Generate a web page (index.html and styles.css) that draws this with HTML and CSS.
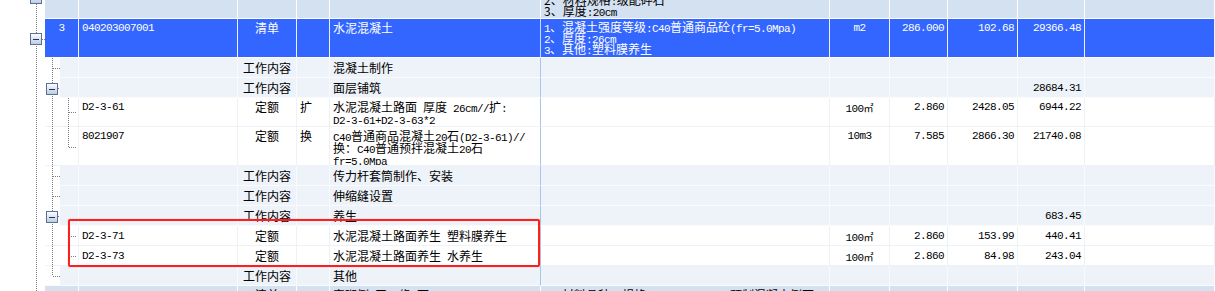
FILE: index.html
```html
<!DOCTYPE html>
<html>
<head>
<meta charset="utf-8">
<link rel="stylesheet" href="styles.css">
</head>
<body>
<div class="sheet">
  <div class="row r-list r-top">
    <div class="c gap"></div><div class="c"></div><div class="c"></div><div class="c"></div><div class="c"></div><div class="c name"></div>
    <div class="c feat"><div class="clip">1、材料品种<span class="a">:</span>水泥稳定碎石<br>2、材料规格<span class="a">:</span>级配碎石<br>3、厚度<span class="a">:20cm</span></div></div>
    <div class="c"></div><div class="c"></div><div class="c"></div><div class="c"></div><div class="c"></div>
  </div>

  <div class="row r-sel h3">
    <div class="c gap"></div>
    <div class="c ctr a">3</div>
    <div class="c a">040203007001</div>
    <div class="c ctr">清单</div>
    <div class="c"></div>
    <div class="c name">水泥混凝土</div>
    <div class="c feat tight"><span class="a">1</span>、混凝土强度等级<span class="a">:C40</span>普通商品砼<span class="a">(fr=5.0Mpa)</span><br><span class="a">2</span>、厚度<span class="a">:26cm</span><br><span class="a">3</span>、其他<span class="a">:</span>塑料膜养生</div>
    <div class="c ctr a">m2</div>
    <div class="c rt a">286.000</div>
    <div class="c rt a">102.68</div>
    <div class="c rt a">29366.48</div>
    <div class="c"></div>
  </div>

  <div class="row r-work h1">
    <div class="c gap"></div><div class="c lv"></div><div class="c"></div>
    <div class="c ctr">工作内容</div><div class="c"></div>
    <div class="c name">混凝土制作</div>
    <div class="c feat"></div><div class="c"></div><div class="c"></div><div class="c"></div><div class="c"></div><div class="c"></div>
  </div>

  <div class="row r-work h1">
    <div class="c gap"></div><div class="c lv"></div><div class="c"></div>
    <div class="c ctr">工作内容</div><div class="c"></div>
    <div class="c name">面层铺筑</div>
    <div class="c feat"></div><div class="c"></div><div class="c"></div><div class="c"></div><div class="c rt a">28684.31</div><div class="c"></div>
  </div>

  <div class="row r-quota h2">
    <div class="c gap"></div><div class="c lv"></div>
    <div class="c a">D2-3-61</div>
    <div class="c ctr">定额</div>
    <div class="c">扩</div>
    <div class="c name">水泥混凝土路面<span class="a"> </span>厚度<span class="a"> 26cm//</span>扩<span class="a">:</span><br><span class="a">D2-3-61+D2-3-63*2</span></div>
    <div class="c feat"></div>
    <div class="c ctr"><span class="a">100</span><span class="sq">㎡</span></div>
    <div class="c rt a">2.860</div>
    <div class="c rt a">2428.05</div>
    <div class="c rt a">6944.22</div>
    <div class="c"></div>
  </div>

  <div class="row r-quota h3">
    <div class="c gap"></div><div class="c lv"></div>
    <div class="c a">8021907</div>
    <div class="c ctr">定额</div>
    <div class="c">换</div>
    <div class="c name"><span class="a">C40</span>普通商品混凝土<span class="a">20</span>石<span class="a">(D2-3-61)//</span><br>换：<span class="a">C40</span>普通预拌混凝土<span class="a">20</span>石<br><span class="a">fr=5.0Mpa</span></div>
    <div class="c feat"></div>
    <div class="c ctr a">10m3</div>
    <div class="c rt a">7.585</div>
    <div class="c rt a">2866.30</div>
    <div class="c rt a">21740.08</div>
    <div class="c"></div>
  </div>

  <div class="row r-work h1">
    <div class="c gap"></div><div class="c lv"></div><div class="c"></div>
    <div class="c ctr">工作内容</div><div class="c"></div>
    <div class="c name">传力杆套筒制作、安装</div>
    <div class="c feat"></div><div class="c"></div><div class="c"></div><div class="c"></div><div class="c"></div><div class="c"></div>
  </div>

  <div class="row r-work h1">
    <div class="c gap"></div><div class="c lv"></div><div class="c"></div>
    <div class="c ctr">工作内容</div><div class="c"></div>
    <div class="c name">伸缩缝设置</div>
    <div class="c feat"></div><div class="c"></div><div class="c"></div><div class="c"></div><div class="c"></div><div class="c"></div>
  </div>

  <div class="row r-work h1">
    <div class="c gap"></div><div class="c lv"></div><div class="c"></div>
    <div class="c ctr">工作内容</div><div class="c"></div>
    <div class="c name">养生</div>
    <div class="c feat"></div><div class="c"></div><div class="c"></div><div class="c"></div><div class="c rt a">683.45</div><div class="c"></div>
  </div>

  <div class="row r-quota h1">
    <div class="c gap"></div><div class="c lv"></div>
    <div class="c a">D2-3-71</div>
    <div class="c ctr">定额</div>
    <div class="c"></div>
    <div class="c name">水泥混凝土路面养生<span class="a"> </span>塑料膜养生</div>
    <div class="c feat"></div>
    <div class="c ctr"><span class="a">100</span><span class="sq">㎡</span></div>
    <div class="c rt a">2.860</div>
    <div class="c rt a">153.99</div>
    <div class="c rt a">440.41</div>
    <div class="c"></div>
  </div>

  <div class="row r-quota h1">
    <div class="c gap"></div><div class="c lv"></div>
    <div class="c a">D2-3-73</div>
    <div class="c ctr">定额</div>
    <div class="c"></div>
    <div class="c name">水泥混凝土路面养生<span class="a"> </span>水养生</div>
    <div class="c feat"></div>
    <div class="c ctr"><span class="a">100</span><span class="sq">㎡</span></div>
    <div class="c rt a">2.860</div>
    <div class="c rt a">84.98</div>
    <div class="c rt a">243.04</div>
    <div class="c"></div>
  </div>

  <div class="row r-work h1">
    <div class="c gap"></div><div class="c lv"></div><div class="c"></div>
    <div class="c ctr">工作内容</div><div class="c"></div>
    <div class="c name">其他</div>
    <div class="c feat"></div><div class="c"></div><div class="c"></div><div class="c"></div><div class="c"></div><div class="c"></div>
  </div>

  <div class="row r-list h3">
    <div class="c gap"></div>
    <div class="c ctr a">4</div>
    <div class="c a">040203004001</div>
    <div class="c ctr">清单</div>
    <div class="c"></div>
    <div class="c name">安砌侧<span class="a">(</span>平、缘<span class="a">)</span>石</div>
    <div class="c feat"><span class="a">1</span>、材料品种、规格<span class="a">:C30 15*30*99 </span>预制混凝土侧石</div>
    <div class="c ctr a">m</div>
    <div class="c rt a">149.000</div>
    <div class="c rt a">4.66</div>
    <div class="c rt a">1112.42</div>
    <div class="c"></div>
  </div>

  <svg class="tree" width="80" height="291" viewBox="0 0 80 291">
    <defs>
      <linearGradient id="bx" x1="0" y1="0" x2="0" y2="1">
        <stop offset="0" stop-color="#ffffff"/>
        <stop offset="1" stop-color="#b9cbe4"/>
      </linearGradient>
    </defs>
    <g stroke="#7c7c7c" stroke-width="1" stroke-dasharray="1 1" fill="none">
      <line x1="36.5" y1="0" x2="36.5" y2="291"/>
      <line x1="42" y1="39.5" x2="45" y2="39.5"/>
      <line x1="52.5" y1="58" x2="52.5" y2="276"/>
      <line x1="53" y1="68.5" x2="60" y2="68.5"/>
      <line x1="58" y1="88.5" x2="60" y2="88.5"/>
      <line x1="68.5" y1="98" x2="68.5" y2="147"/>
      <line x1="69" y1="112.5" x2="77" y2="112.5"/>
      <line x1="69" y1="147.5" x2="77" y2="147.5"/>
      <line x1="53" y1="176.5" x2="60" y2="176.5"/>
      <line x1="53" y1="196.5" x2="60" y2="196.5"/>
      <line x1="58" y1="216.5" x2="60" y2="216.5"/>
      <line x1="68.5" y1="226" x2="68.5" y2="256"/>
      <line x1="69" y1="236.5" x2="77" y2="236.5"/>
      <line x1="69" y1="256.5" x2="77" y2="256.5"/>
      <line x1="53" y1="276.5" x2="60" y2="276.5"/>
    </g>
    <g class="exp">
      <rect x="30.5" y="-7.5" width="11" height="11" fill="url(#bx)" stroke="#5d7193"/>
      <rect x="30.5" y="33.5" width="11" height="11" fill="url(#bx)" stroke="#5d7193"/>
      <line x1="33" y1="39.5" x2="39" y2="39.5" stroke="#1b3566"/>
      <rect x="46.5" y="83.5" width="11" height="11" fill="url(#bx)" stroke="#5d7193"/>
      <line x1="49" y1="89.5" x2="55" y2="89.5" stroke="#1b3566"/>
      <rect x="46.5" y="211.5" width="11" height="11" fill="url(#bx)" stroke="#5d7193"/>
      <line x1="49" y1="217.5" x2="55" y2="217.5" stroke="#1b3566"/>
    </g>
  </svg>

  <div class="mark"></div>
</div>
</body>
</html>
```

FILE: styles.css
```css
html, body {
  margin: 0;
  padding: 0;
  background: #ffffff;
}

body {
  font-family: "Noto Sans CJK SC", "Noto Sans", sans-serif;
  font-size: 12px;
  line-height: 12px;
  color: #000000;
}

.sheet {
  position: relative;
  width: 1215px;
  height: 291px;
  overflow: hidden;
}

.row {
  display: grid;
  grid-template-columns: 45px 34px 159px 59px 33px 211px 289px 60px 58px 70px 67px 130px;
  --pt: 4px;
}

.h1 { height: 20px; }
.h2 { height: 29px; --pt: 3px; }
.h3 { height: 39px; --pt: 3px; }

.r-top { height: 19px; }

.r-list {
  --bg: #d3e1f1;
  --vl: #ffffff;
  --hl: #ffffff;
  --nl: #ffffff;
}

.r-sel {
  --bg: #3366ff;
  --vl: #eef2ff;
  --hl: #ffffff;
  --nl: #c9d8ff;
  color: #ffffff;
}

.r-work {
  --bg: #eef3f9;
  --vl: #f8fafd;
  --hl: #f9fbfd;
  --nl: #a8c6ec;
}

.r-quota {
  --bg: #ffffff;
  --vl: #eef2f7;
  --hl: #eef2f7;
  --nl: #a8c6ec;
}

.c {
  box-sizing: border-box;
  padding: var(--pt) 3px 0 3px;
  overflow: hidden;
  white-space: nowrap;
  background: var(--bg);
  border-right: 1px solid var(--vl);
  border-bottom: 1px solid var(--hl);
}

.c.gap {
  background: #ffffff;
  border: 0;
}

.c.lv {
  background: linear-gradient(to right, #ffffff 15px, var(--bg) 15px);
}

.c.name {
  border-right-color: var(--nl);
}

.c.tight {
  line-height: 11px;
  padding-top: 2px;
}

.clip {
  margin-top: -21px;
  line-height: 11px;
}

.ctr { text-align: center; }
.rt { text-align: right; }

.a {
  font-family: "Liberation Mono", "DejaVu Sans Mono", monospace;
  font-size: 11px;
  letter-spacing: -0.6px;
}

span.a,
span.sq {
  line-height: 0;
}

.c.a {
  line-height: 12px;
}

.sq {
  font-size: 10px;
}

.tree {
  position: absolute;
  left: 0;
  top: 0;
  pointer-events: none;
}

.mark {
  position: absolute;
  left: 68px;
  top: 219px;
  width: 472px;
  height: 48px;
  box-sizing: border-box;
  border: 2px solid #ff1e1e;
  border-radius: 2px;
  box-shadow: 0 0 1px rgba(255, 40, 40, 0.6);
  pointer-events: none;
}
```
